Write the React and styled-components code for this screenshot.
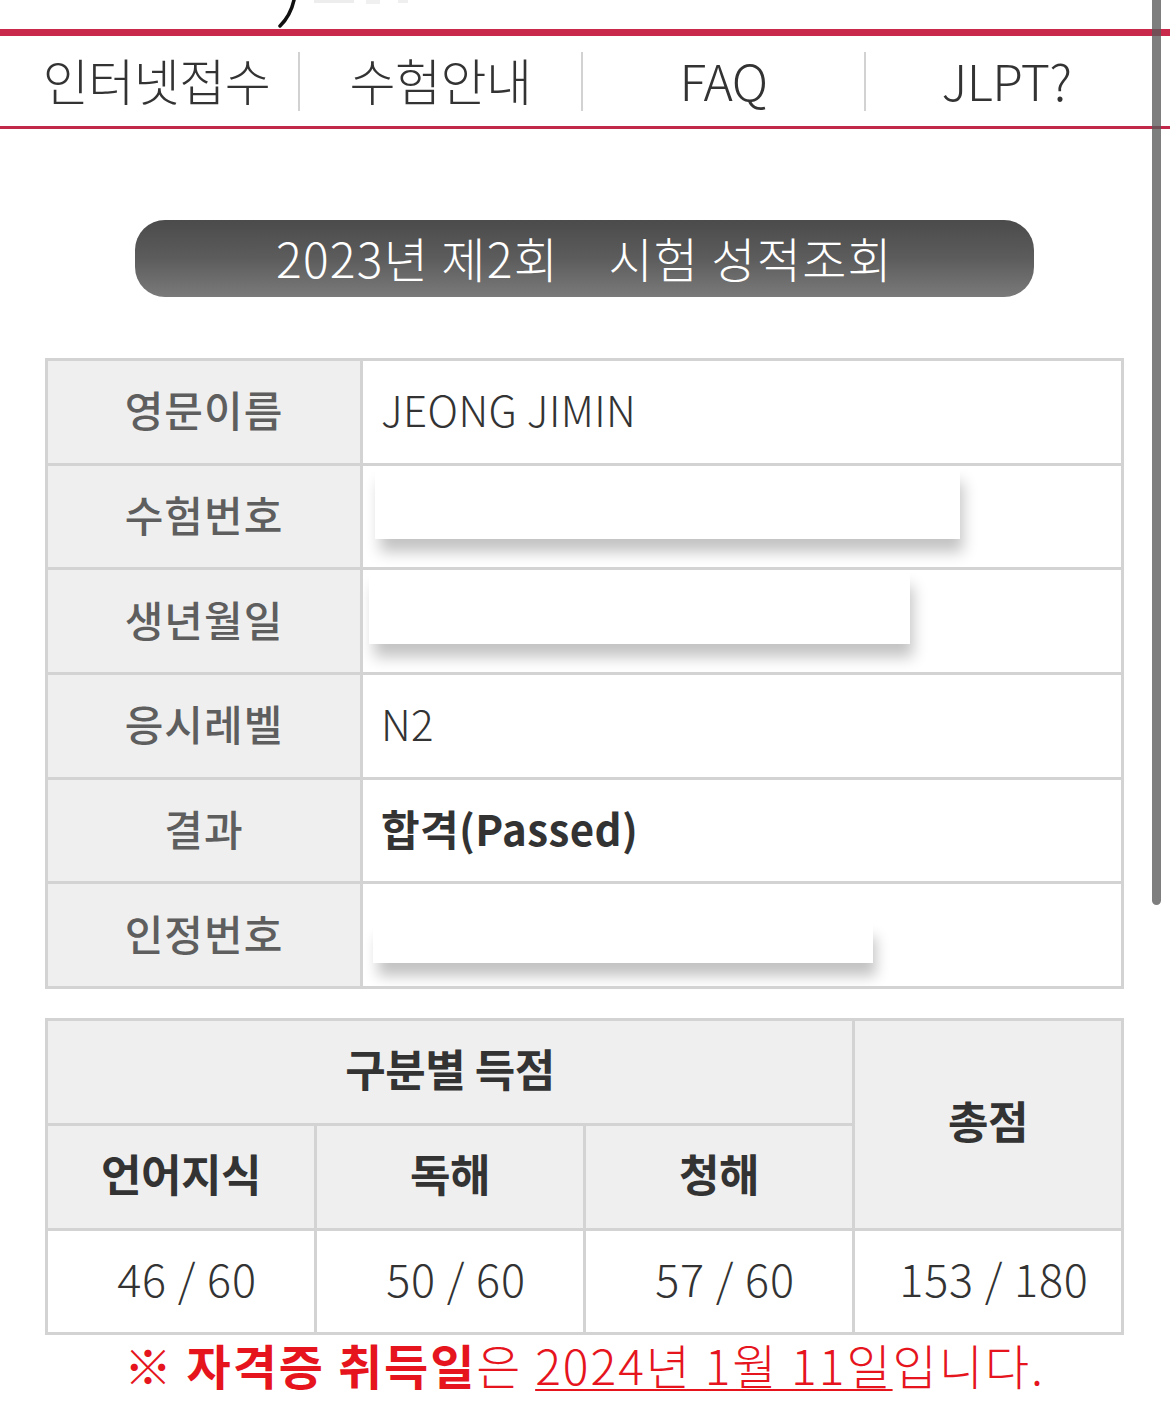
import styled, { createGlobalStyle } from "styled-components";

const GlobalStyle = createGlobalStyle`
  html, body {
    margin: 0;
    padding: 0;
    background: #fff;
  }
  body {
    font-family: "Noto Sans CJK KR", "Noto Sans", sans-serif;
    color: #333;
  }
`;

const Page = styled.div`
  width: 1170px;
  min-height: 1421px;
  position: relative;
  overflow: hidden;
`;

const LogoStrip = styled.div`
  height: 29px;
  padding-left: 270px;
  & svg {
    display: block;
  }
`;

const NavBar = styled.nav`
  height: 90px;
  border-top: 7px solid #c92a4b;
  border-bottom: 3px solid #c2284a;
  display: flex;
  align-items: center;
  padding-left: 15px;
`;

const NavItem = styled.a`
  width: 283px;
  height: 59px;
  display: flex;
  align-items: center;
  justify-content: center;
  padding-bottom: 5px;
  box-sizing: border-box;
  font-size: 50px;
  font-weight: 300;
  letter-spacing: -0.5px;
  color: #333;
  text-decoration: none;
  border-left: ${(p) => (p.$first ? "none" : "2px solid #d2d2d2")};
`;

const Main = styled.main`
  padding: 91px 46px 0 45px;
  display: flex;
  flex-direction: column;
`;

const TitlePill = styled.h1`
  margin: 0 90px;
  height: 77px;
  border-radius: 30px;
  background: linear-gradient(to bottom, #4b4b4b 0%, #5c5c5c 50%, #7a7a7a 100%);
  color: #fff;
  display: flex;
  align-items: center;
  justify-content: center;
  padding-bottom: 3px;
  box-sizing: border-box;
  font-size: 48px;
  font-weight: 300;
  letter-spacing: 1.3px;
  white-space: pre;
`;

const InfoTable = styled.table`
  margin-top: 61px;
  width: 100%;
  border-collapse: collapse;
  table-layout: fixed;
  border: 3px solid #d3d3d3;

  tr {
    height: 104.7px;
  }
  th,
  td {
    border: 3px solid #d3d3d3;
    padding: 0 0 6px;
  }
`;

const Label = styled.th`
  background: #efefef;
  color: #5e5e5e;
  font-size: 42px;
  font-weight: 500;
  letter-spacing: 1px;
  text-align: center;
`;

const Value = styled.td`
  background: #fff;
  color: #333;
  font-size: 42px;
  font-weight: ${(p) => (p.$strong ? 700 : 300)};
  letter-spacing: 0.4px;
  padding-left: 18px !important;
  vertical-align: ${(p) => (p.$top ? "top" : "middle")};
`;

const Redact = styled.div`
  width: ${(p) => p.$w}px;
  height: ${(p) => p.$h}px;
  margin-top: ${(p) => p.$top}px;
  margin-left: ${(p) => p.$left}px;
  background: #fff;
  box-shadow: 4px 14px 14px -1px rgba(0, 0, 0, 0.24);
`;

const ScoreTable = styled.table`
  margin-top: 29px;
  width: 100%;
  border-collapse: collapse;
  table-layout: fixed;

  tr {
    height: 104.7px;
  }
  th,
  td {
    border: 3px solid #d3d3d3;
    padding: 0 0 8px;
    text-align: center;
  }
`;

const ScoreHead = styled.th`
  background: #efefef;
  color: #333;
  font-size: 44px;
  font-weight: 700;
  letter-spacing: -0.5px;
`;

const ScoreCell = styled.td`
  background: #fff;
  color: #333;
  font-size: 45px;
  font-weight: 300;
  letter-spacing: 0.8px;
  padding-left: 12px !important;
`;

const Note = styled.p`
  margin: 0;
  text-align: center;
  color: #e5141d;
  font-size: 48px;
  font-weight: 300;
  letter-spacing: 2px;
  line-height: 58px;

  b {
    font-weight: 700;
  }
  u {
    text-decoration-thickness: 2px;
    text-underline-offset: 4px;
  }
`;

const ScrollThumb = styled.div`
  position: absolute;
  top: 0;
  right: 9px;
  width: 9px;
  height: 905px;
  border-radius: 0 0 5px 5px;
  background: rgba(90, 90, 90, 0.78);
`;

const navItems = ["인터넷접수", "수험안내", "FAQ", "JLPT?"];

const info = [
  { label: "영문이름", value: "JEONG JIMIN" },
  { label: "수험번호", redact: { w: 585, h: 72, top: 1, left: -6 } },
  { label: "생년월일", redact: { w: 541, h: 73, top: 1, left: -12 } },
  { label: "응시레벨", value: "N2" },
  { label: "결과", value: "합격(Passed)", strong: true },
  { label: "인정번호", redact: { w: 500, h: 41, top: 38, left: -8 } },
];

const scores = ["46 / 60", "50 / 60", "57 / 60", "153 / 180"];

export default function App() {
  return (
    <Page>
      <GlobalStyle />
      <LogoStrip>
        <svg width="200" height="29" viewBox="0 0 200 29">
          <path
            d="M24 0 C22 9 18 18 10 26"
            stroke="#111"
            strokeWidth="3.5"
            fill="none"
            strokeLinecap="round"
          />
          <rect x="44" y="0" width="40" height="3" fill="#ededed" />
          <rect x="96" y="0" width="14" height="4" fill="#f0f0f0" />
          <rect x="128" y="0" width="10" height="3" fill="#efefef" />
        </svg>
      </LogoStrip>

      <NavBar>
        {navItems.map((item, i) => (
          <NavItem key={item} $first={i === 0}>
            {item}
          </NavItem>
        ))}
      </NavBar>

      <Main>
        <TitlePill>2023년 제2회　시험 성적조회</TitlePill>

        <InfoTable>
          <colgroup>
            <col style={{ width: 315 }} />
            <col />
          </colgroup>
          <tbody>
            {info.map((row) => (
              <tr key={row.label}>
                <Label>{row.label}</Label>
                {row.redact ? (
                  <Value $top>
                    <Redact
                      $w={row.redact.w}
                      $h={row.redact.h}
                      $top={row.redact.top}
                      $left={row.redact.left}
                    />
                  </Value>
                ) : (
                  <Value $strong={row.strong}>{row.value}</Value>
                )}
              </tr>
            ))}
          </tbody>
        </InfoTable>

        <ScoreTable>
          <tbody>
            <tr>
              <ScoreHead colSpan={3}>구분별 득점</ScoreHead>
              <ScoreHead rowSpan={2}>총점</ScoreHead>
            </tr>
            <tr>
              <ScoreHead>언어지식</ScoreHead>
              <ScoreHead>독해</ScoreHead>
              <ScoreHead>청해</ScoreHead>
            </tr>
            <tr>
              {scores.map((s) => (
                <ScoreCell key={s}>{s}</ScoreCell>
              ))}
            </tr>
          </tbody>
        </ScoreTable>

        <Note>
          ※ <b>자격증 취득일</b>은 <u>2024년 1월 11일</u>입니다.
        </Note>
      </Main>

      <ScrollThumb />
    </Page>
  );
}
